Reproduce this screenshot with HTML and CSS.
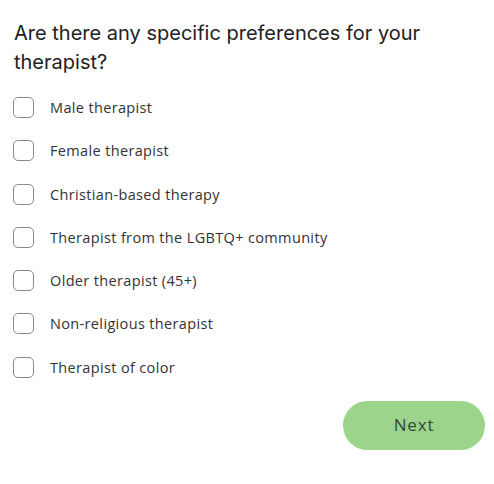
FILE: index.html
```html
<!DOCTYPE html>
<html>
<head>
<meta charset="utf-8">
<link rel="stylesheet" href="styles.css">
</head>
<body>
<div class="page">
  <h1 class="question">Are there any specific preferences for your therapist?</h1>
  <ul class="options">
    <li class="option"><span class="box"></span><span class="label">Male therapist</span></li>
    <li class="option"><span class="box"></span><span class="label">Female therapist</span></li>
    <li class="option"><span class="box"></span><span class="label">Christian-based therapy</span></li>
    <li class="option"><span class="box"></span><span class="label">Therapist from the LGBTQ+ community</span></li>
    <li class="option"><span class="box"></span><span class="label">Older therapist (45+)</span></li>
    <li class="option"><span class="box"></span><span class="label">Non-religious therapist</span></li>
    <li class="option"><span class="box"></span><span class="label">Therapist of color</span></li>
  </ul>
  <div class="actions">
    <button class="next">Next</button>
  </div>
</div>
</body>
</html>
```
FILE: styles.css
```css
* { box-sizing: border-box; }
html, body { margin: 0; padding: 0; background: #fff; }
.page {
  width: 494px;
  padding: 19px 9px 0 13px;
}
.question {
  margin: 0 0 20px 1px;
  font-family: Inter, "Liberation Sans", sans-serif;
  font-weight: 400;
  font-size: 20px;
  line-height: 29px;
  color: #222;
  letter-spacing: 0;
}
.options {
  list-style: none;
  margin: 0;
  padding: 0;
  display: flex;
  flex-direction: column;
  gap: 22.3px;
}
.option {
  display: flex;
  align-items: center;
  height: 21px;
}
.box {
  width: 21px;
  height: 21px;
  border: 1.5px solid #8a8a8a;
  border-radius: 5px;
  flex: none;
}
.label {
  margin-left: 16px;
  font-family: "Open Sans", "Liberation Sans", sans-serif;
  font-weight: 500;
  font-size: 14.5px;
  color: #333;
  letter-spacing: 0.35px;
}
.actions {
  display: flex;
  justify-content: flex-end;
  margin-top: 23px;
}
.next {
  width: 142px;
  height: 49px;
  border: none;
  border-radius: 25px;
  background: #9bd48a;
  color: #2f4a36;
  font-family: "Open Sans", "Liberation Sans", sans-serif;
  font-weight: 500;
  font-size: 17px;
  letter-spacing: 0.8px;
  padding: 0 0 2px 0;
}
```
